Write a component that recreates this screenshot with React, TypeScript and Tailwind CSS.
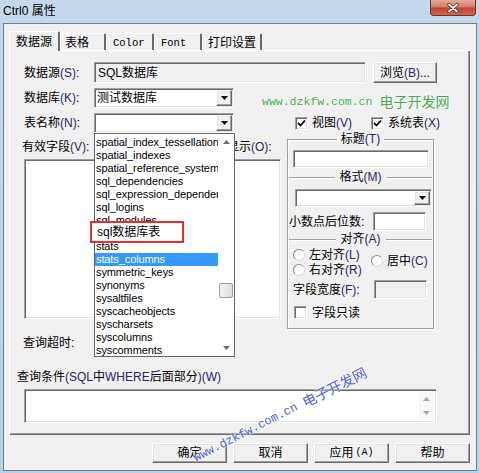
const sans = "font-['Liberation_Sans','Noto_Sans_CJK_SC',sans-serif]";
const mono = "font-['Liberation_Mono','Noto_Sans_CJK_SC',monospace]";
const sunken =
  "border border-[#a0a0a0] border-r-white border-b-white shadow-[inset_1px_1px_0_#696969,inset_-1px_-1px_0_#e3e3e3]";
const raised =
  "border border-white border-r-[#696969] border-b-[#696969] shadow-[inset_-1px_-1px_0_#a0a0a0,inset_1px_1px_0_#e3e3e3] bg-[#f0f0f0]";

const tables = [
  "spatial_index_tessellations",
  "spatial_indexes",
  "spatial_reference_systems",
  "sql_dependencies",
  "sql_expression_dependencies",
  "sql_logins",
  "sql_modules",
  "sql_sqlservers",
  "stats",
  "stats_columns",
  "symmetric_keys",
  "synonyms",
  "sysaltfiles",
  "syscacheobjects",
  "syscharsets",
  "syscolumns",
  "syscomments",
];

function K({ c }: { c: string }) {
  return <span className="text-[#2a2370]">{c}</span>;
}

function Arrow() {
  return (
    <div className={`my-[1px] mr-[1px] flex w-[16px] items-center justify-center ${raised}`}>
      <svg width="7" height="4" viewBox="0 0 7 4">
        <path d="M0 0h7L3.5 4z" fill="#000" />
      </svg>
    </div>
  );
}

function Check({ on }: { on?: boolean }) {
  return (
    <div className={`flex h-[13px] w-[13px] shrink-0 items-center justify-center bg-white ${sunken}`}>
      {on && (
        <svg width="9" height="9" viewBox="0 0 9 9">
          <path d="M1 4l2.5 2.5L8 1.5" stroke="#000" strokeWidth="1.8" fill="none" />
        </svg>
      )}
    </div>
  );
}

function Radio() {
  return (
    <div className="h-[12px] w-[12px] shrink-0 rounded-full border border-[#8a8a8a] border-r-[#dcdcdc] border-b-[#dcdcdc] bg-white" />
  );
}

function Sep({ children }: { children: React.ReactNode }) {
  return (
    <div className="mx-[1px] flex h-[14px] items-center">
      <div className="h-px flex-1 bg-[#a0a0a0] shadow-[0_1px_0_#fff]" />
      <span className="px-[5px] text-[12px] leading-[14px]">{children}</span>
      <div className="h-px flex-1 bg-[#a0a0a0] shadow-[0_1px_0_#fff]" />
    </div>
  );
}

export default function App() {
  return (
    <div
      className={`relative h-[473px] w-[479px] overflow-hidden bg-[linear-gradient(180deg,#c4d8ed_0%,#b9cfe7_100%)] text-black ${sans}`}
    >
      {/* title bar */}
      <div className="flex h-[23px] items-start justify-between pl-[3px] pr-[3px]">
        <span className="mt-[4px] text-[12px] leading-[15px]">Ctrl0 属性</span>
        <div className="flex h-[16px] w-[46px] items-center justify-center rounded-b-[4px] border border-t-0 border-[#6d2f2a] bg-[linear-gradient(180deg,#e9a99a_0%,#d57a66_45%,#c2442f_55%,#d2674e_100%)]">
          <svg width="12" height="10" viewBox="0 0 12 10">
            <path d="M2 1.5l8 7M10 1.5l-8 7" stroke="#4a2a28" strokeWidth="3.4" strokeLinecap="round" />
            <path d="M2 1.5l8 7M10 1.5l-8 7" stroke="#fff" strokeWidth="1.8" strokeLinecap="round" />
          </svg>
        </div>
      </div>

      {/* client */}
      <div className="ml-[3px] h-[448px] w-[474px] border border-[#6b7d92] bg-[#f0f0f0]">
        {/* tabs */}
        <div className="flex h-[26px] items-end pl-[5px] text-[12px] leading-[14px]">
          <div className="relative z-10 -mb-px flex h-[20px] w-[51px] items-center justify-center rounded-t-[2px] border-l border-t border-white border-r-2 border-r-[#696969] bg-[#f0f0f0]">
            数据源
          </div>
          <div className="flex h-[17px] w-[46px] items-center rounded-t-[2px] border-l border-t border-white border-r-2 border-r-[#696969] pl-[4px] pt-[1px]">
            表格
          </div>
          <div className={`flex h-[17px] w-[48px] items-center rounded-t-[2px] border-l border-t border-white border-r-2 border-r-[#696969] pl-[6px] pt-[1px] text-[10.5px] ${mono}`}>
            Color
          </div>
          <div className={`flex h-[17px] w-[48px] items-center rounded-t-[2px] border-l border-t border-white border-r-2 border-r-[#696969] pl-[6px] pt-[1px] text-[10.5px] ${mono}`}>
            Font
          </div>
          <div className="flex h-[17px] w-[60px] items-center rounded-t-[2px] border-l border-t border-white border-r-2 border-r-[#696969] pl-[5px] pt-[1px]">
            打印设置
          </div>
        </div>

        {/* panel */}
        <div className="ml-[5px] flex h-[385px] w-[461px] flex-col text-[12px] leading-[14px] shadow-[inset_1px_1px_0_#fff,inset_-1px_-1px_0_#696969,inset_-2px_-2px_0_#a0a0a0]">
          <div className="mt-[12px] flex h-[21px] items-center pl-[15px]">
            <span className="w-[70px]">
              数据源<K c="(S)" />:
            </span>
            <div className={`flex h-full w-[272px] items-center bg-[#f0f0f0] pl-[3px] ${sunken}`}>SQL数据库</div>
            <div className={`ml-[7px] flex h-full w-[64px] items-center justify-center ${raised}`}>
              浏览<K c="(B)" />...
            </div>
          </div>

          <div className="mt-[5px] flex h-[20px] items-center pl-[15px]">
            <span className="w-[70px]">
              数据库<K c="(K)" />:
            </span>
            <div className={`flex h-full w-[140px] bg-white ${sunken}`}>
              <span className="flex flex-1 items-center pl-[2px]">测试数据库</span>
              <Arrow />
            </div>
          </div>

          <div className="mt-[5px] flex h-[20px] items-center pl-[15px]">
            <span className="w-[70px]">
              表名称<K c="(N)" />:
            </span>
            <div className={`flex h-full w-[140px] bg-white ${sunken}`}>
              <span className="flex-1" />
              <Arrow />
            </div>
            <div className="ml-[61px] flex w-[76px] items-center gap-[4px]">
              <Check on />
              <span>
                视图<K c="(V)" />
              </span>
            </div>
            <div className="flex items-center gap-[4px]">
              <Check on />
              <span>
                系统表<K c="(X)" />
              </span>
            </div>
          </div>

          {/* fields + group */}
          <div className="mt-[6px] flex h-[191px]">
            <div className="flex w-[278px] flex-col">
              <div className="mt-[1px] flex h-[14px] pl-[13px]">
                <span className="w-[205px]">
                  有效字段<K c="(V)" />:
                </span>
                <span>
                  显示<K c="(O)" />:
                </span>
              </div>
              <div className="mt-[5px] flex h-[160px]">
                <div className={`ml-[15px] w-[191px] bg-white ${sunken}`} />
                <div className={`ml-[12px] w-[54px] bg-white ${sunken}`} />
              </div>
            </div>
            <div className="flex h-[190px] w-[147px] flex-col border border-[#a0a0a0] shadow-[inset_1px_1px_0_#fff,1px_1px_0_#fff]">
              <span className="-mt-[8px] self-center bg-[#f0f0f0] px-[4px]">
                标题<K c="(T)" />
              </span>
              <div className={`ml-[5px] mt-[4px] h-[18px] w-[136px] bg-white ${sunken}`} />
              <div className="mt-[2px]">
                <Sep>
                  格式<K c="(M)" />
                </Sep>
              </div>
              <div className={`ml-[7px] mt-[5px] flex h-[18px] w-[137px] bg-white ${sunken}`}>
                <span className="flex-1" />
                <Arrow />
              </div>
              <div className="mt-[5px] flex h-[19px] items-center pl-[1px]">
                <span className="w-[84px]">小数点后位数:</span>
                <div className={`h-full w-[53px] bg-white ${sunken}`} />
              </div>
              <div className="mt-[1px]">
                <Sep>
                  对齐<K c="(A)" />
                </Sep>
              </div>
              <div className="mt-[3px] flex pl-[5px]">
                <div className="flex w-[78px] flex-col gap-[3px]">
                  <div className="flex h-[12px] items-center gap-[4px]">
                    <Radio />
                    <span>
                      左对齐<K c="(L)" />
                    </span>
                  </div>
                  <div className="flex h-[12px] items-center gap-[4px]">
                    <Radio />
                    <span>
                      右对齐<K c="(R)" />
                    </span>
                  </div>
                </div>
                <div className="mt-[6px] flex h-[12px] items-center gap-[4px]">
                  <Radio />
                  <span>
                    居中<K c="(C)" />
                  </span>
                </div>
              </div>
              <div className="mt-[4px] flex h-[19px] items-center pl-[5px]">
                <span className="w-[81px]">
                  字段宽度<K c="(F)" />:
                </span>
                <div className={`h-full w-[53px] bg-[#f0f0f0] ${sunken}`} />
              </div>
              <div className="mt-[7px] flex h-[13px] items-center gap-[5px] pl-[6px]">
                <Check />
                <span>字段只读</span>
              </div>
            </div>
          </div>

          <div className="mt-[6px] flex h-[14px] items-center pl-[14px]">查询超时:</div>
          <div className="mt-[20px] flex h-[14px] items-center pl-[8px]">
            查询条件<K c="(SQL" />中<K c="WHERE" />后面部分<K c=")(W)" />
          </div>
          <div className={`ml-[15px] mt-[5px] flex h-[34px] w-[413px] bg-white ${sunken}`}>
            <div className="flex-1" />
            <div className="my-[2px] mr-[2px] flex w-[15px] flex-col items-center justify-between bg-[#f7f7f7] py-[5px]">
              <svg width="7" height="4" viewBox="0 0 7 4">
                <path d="M0 4h7L3.5 0z" fill="#a8a8a8" />
              </svg>
              <svg width="7" height="4" viewBox="0 0 7 4">
                <path d="M0 0h7L3.5 4z" fill="#a8a8a8" />
              </svg>
            </div>
          </div>
        </div>

        {/* buttons */}
        <div className="mt-[8px] flex gap-[6px] pl-[148px] text-[12px] leading-[14px]">
          <div className={`flex h-[20px] w-[75px] items-center justify-center ${raised}`}>确定</div>
          <div className={`flex h-[20px] w-[75px] items-center justify-center ${raised}`}>取消</div>
          <div className={`flex h-[20px] w-[75px] items-center justify-center ${raised}`}>
            应用<span className={`ml-[2px] text-[10px] ${mono}`}>(A)</span>
          </div>
          <div className={`flex h-[20px] w-[75px] items-center justify-center ${raised}`}>帮助</div>
        </div>
      </div>

      {/* open dropdown list */}
      <div className="absolute left-[94px] top-[133px] z-20 flex h-[224px] w-[141px] border border-[#646464] bg-white">
        <div className="flex-1 overflow-hidden pt-[2px]">
          {tables.map((t, i) => (
            <div
              key={i}
              className={`h-[13px] whitespace-nowrap pl-[1px] text-[11px] leading-[13px] tracking-[-0.1px] ${
                i === 9 ? "bg-[#3399ff] text-white" : "text-black"
              }`}
            >
              {t}
            </div>
          ))}
        </div>
        <div className="relative flex w-[16px] flex-col items-center justify-between bg-white py-[6px]">
          <svg width="7" height="4" viewBox="0 0 7 4">
            <path d="M0 4h7L3.5 0z" fill="#6e6e6e" />
          </svg>
          <div className="absolute left-[1px] top-[149px] h-[15px] w-[14px] rounded-[2px] border border-[#9a9a9a] bg-[linear-gradient(90deg,#f3f3f3,#dcdcdc)]" />
          <svg width="7" height="4" viewBox="0 0 7 4">
            <path d="M0 0h7L3.5 4z" fill="#6e6e6e" />
          </svg>
        </div>
      </div>

      {/* red annotation box */}
      <div className="absolute left-[90px] top-[221px] z-30 flex h-[22px] w-[94px] items-center border-2 border-[#ec2a2a] bg-white pl-[5px] text-[12px] leading-[14px]">
        sql数据库表
      </div>

      {/* green watermark */}
      <div className="absolute left-[262px] top-[94px] z-30 flex items-center whitespace-nowrap text-[#3fae48] [text-shadow:0_0_2px_#fff,0_0_3px_#fff]">
        <span className={`text-[11.5px] leading-[14px] ${mono}`}>www.dzkfw.com.cn</span>
        <span className="ml-[7px] text-[14px] leading-[16px]">电子开发网</span>
      </div>

      {/* diagonal blue watermark */}
      <div className="absolute left-[198px] top-[450px] z-30 flex h-[16px] origin-bottom-left -rotate-[27deg] items-end whitespace-nowrap text-[#4f60e0] [text-shadow:0_0_2px_#fff,0_0_3px_#fff]">
        <span className={`text-[12px] leading-[16px] ${mono}`}>www.dzkfw.com.cn</span>
        <span className="ml-[7px] text-[14px] leading-[16px]">电子开发网</span>
      </div>
    </div>
  );
}
